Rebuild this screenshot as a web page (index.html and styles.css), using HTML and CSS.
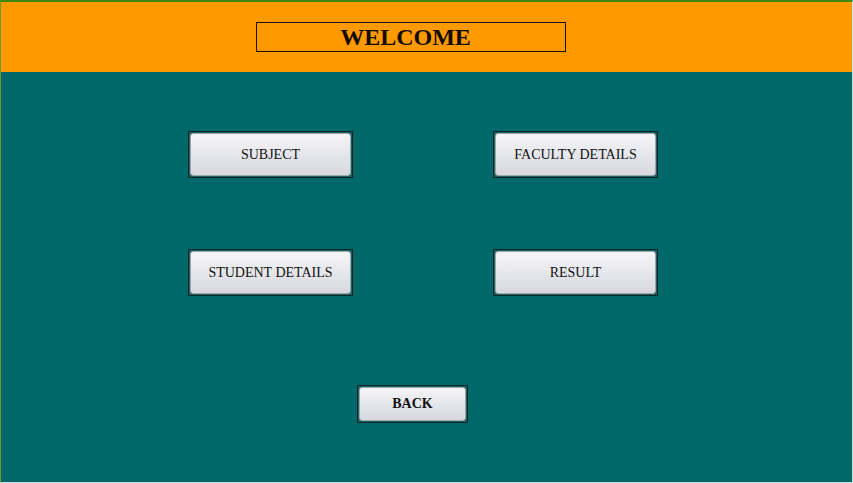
FILE: index.html
```html
<!DOCTYPE html>
<html lang="en">
<head>
    <meta charset="UTF-8">
    <meta name="viewport" content="width=device-width, initial-scale=1.0">
    <title>Welcome</title>
    <link rel="stylesheet" href="styles.css">
</head>
<body>
    <div class="frame">
        <header class="header">
            <h1 class="welcome">WELCOME</h1>
        </header>

        <main class="panel">
            <div class="menu">
                <span class="btn-wrap"><button class="btn">SUBJECT</button></span>
                <span class="btn-wrap"><button class="btn">FACULTY DETAILS</button></span>
                <span class="btn-wrap"><button class="btn">STUDENT DETAILS</button></span>
                <span class="btn-wrap"><button class="btn">RESULT</button></span>
            </div>

            <div class="back-row">
                <span class="btn-wrap back"><button class="btn btn-bold">BACK</button></span>
            </div>
        </main>
    </div>
</body>
</html>
```

FILE: styles.css
```css
* {
    box-sizing: border-box;
}

body {
    margin: 0;
    font-family: "Liberation Serif", "Times New Roman", serif;
    background-color: #d8e6e6;
}

.frame {
    height: 483px;
    display: flex;
    flex-direction: column;
    border-top: 2px solid #3d8a10;
    border-left: 1px solid #6e9a30;
    border-right: 1px solid #cfe0e0;
    border-bottom: 1px solid #cfe0e0;
}

.header {
    height: 70px;
    background-color: #ff9900;
    padding: 20px 0 0 255px;
}

.welcome {
    width: 310px;
    height: 30px;
    margin: 0;
    padding-right: 11px;
    border: 1px solid #1a1000;
    text-align: center;
    font-size: 24px;
    line-height: 28px;
    font-weight: bold;
    color: #140c00;
}

.panel {
    flex: 1;
    background-color: #006868;
    padding-top: 59px;
}

.menu {
    display: grid;
    grid-template-columns: 165px 165px;
    column-gap: 140px;
    row-gap: 71px;
    margin-left: 187px;
}

.btn-wrap {
    display: block;
    height: 47px;
    padding: 1px;
    border: 1px solid #0c2626;
    background-color: #1f5f62;
}

.btn {
    width: 100%;
    height: 100%;
    border: 1px solid #9aa8b0;
    border-radius: 3px;
    background: linear-gradient(#f6f6f8, #e4e5ea 55%, #d6d8de);
    font-family: "Liberation Serif", "Times New Roman", serif;
    font-size: 14px;
    color: #111;
    cursor: pointer;
    padding: 0;
}

.btn:hover {
    background: linear-gradient(#ffffff, #eceef2);
}

.btn-bold {
    font-weight: bold;
}

.back-row {
    margin: 89px 0 0 356px;
}

.back {
    width: 111px;
    height: 38px;
}
```
